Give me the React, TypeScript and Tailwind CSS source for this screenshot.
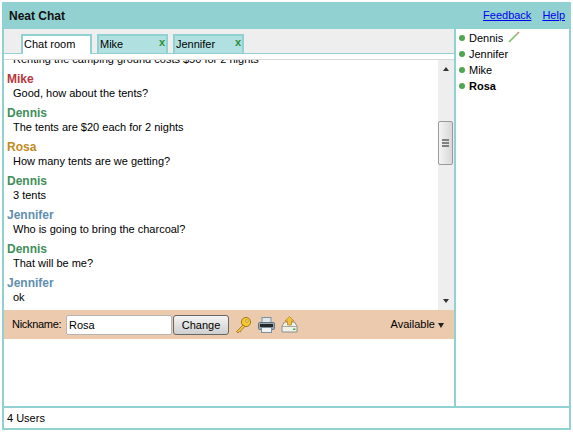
const font = { fontFamily: '"Liberation Sans", Arial, sans-serif' };

const messages: [string, string, string][] = [
  ["Mike", "text-[#b5383c]", "Good, how about the tents?"],
  ["Dennis", "text-[#3f8f5a]", "The tents are $20 each for 2 nights"],
  ["Rosa", "text-[#c08a20]", "How many tents are we getting?"],
  ["Dennis", "text-[#3f8f5a]", "3 tents"],
  ["Jennifer", "text-[#5f8fb0]", "Who is going to bring the charcoal?"],
  ["Dennis", "text-[#3f8f5a]", "That will be me?"],
  ["Jennifer", "text-[#5f8fb0]", "ok"],
];

function Tab({ label }: { label: string }) {
  return (
    <div className="relative w-[71px] h-[19px] bg-[#b0e0e0] border-2 border-b-0 border-[#92d1d1] pl-[1px] text-[11px] leading-[16px] text-black">
      {label}
      <span className="absolute right-[1px] top-[-1px] text-[11px] leading-[14px] font-bold text-[#2a8f35]">x</span>
    </div>
  );
}

function User({ name, bold, pencil }: { name: string; bold?: boolean; pencil?: boolean }) {
  return (
    <div className={`flex items-center h-[16px] pl-[3px] text-[11px] text-black ${bold ? "font-bold" : ""}`}>
      <span className="w-[6px] h-[6px] rounded-full bg-[#4fa64f] mr-[4px]" />
      <span>{name}</span>
      {pencil && (
        <svg width="12" height="12" viewBox="0 0 12 12" className="ml-[5px] mb-[3px]">
          <path d="M1 11 L9 3" stroke="#7fc06a" strokeWidth="1.7" />
          <path d="M9 3 L11 1" stroke="#d98a8a" strokeWidth="1.7" />
        </svg>
      )}
    </div>
  );
}

function KeyIcon() {
  return (
    <svg width="17" height="18" viewBox="0 0 17 18">
      <circle cx="11" cy="6" r="4.6" fill="#f5c830" stroke="#a07a20" strokeWidth="1" />
      <circle cx="12" cy="5" r="1.3" fill="#fdf0b0" stroke="#a07a20" strokeWidth="0.6" />
      <path d="M8 9 L1.5 15.5 L3 17 L4.5 15.5 L5.5 16 L6 14.5 L10 10.5 Z" fill="#f0c040" stroke="#9a7420" strokeWidth="0.8" />
    </svg>
  );
}

function PrinterIcon() {
  return (
    <svg width="17" height="16" viewBox="0 0 17 16">
      <rect x="4" y="0.5" width="9" height="5" fill="#dfe7ec" stroke="#7f8f9a" />
      <rect x="0.5" y="5.5" width="16" height="7" rx="1" fill="#9aa7b0" stroke="#66747d" />
      <rect x="2" y="7" width="13" height="3" fill="#24282b" />
      <rect x="3.5" y="10.5" width="10" height="5" fill="#eef3f6" stroke="#7f8f9a" />
    </svg>
  );
}

function UploadIcon() {
  return (
    <svg width="17" height="17" viewBox="0 0 17 17">
      <path d="M1 10 L3.5 6 H13.5 L16 10 V16 H1 Z" fill="#f1f1ea" stroke="#8b8f88" />
      <path d="M1 10.5 H16" stroke="#a7aaa3" />
      <rect x="12" y="12.5" width="2.5" height="1.5" fill="#46b04a" />
      <path d="M8.5 0.5 L13 5 H10.5 V9 H6.5 V5 H4 Z" fill="#f2c23e" stroke="#b98a20" strokeWidth="0.8" />
    </svg>
  );
}

export default function App() {
  return (
    <div className="w-[573px] h-[433px] bg-white p-[2px]" style={font}>
      <div className="w-[569px] h-[428px] flex flex-col border-2 border-t-0 border-[#92d1d1]">
        <div className="h-[27px] shrink-0 -mx-[2px] bg-[#92d1d1] flex items-center justify-between pl-[7px] pr-[6px]">
          <span className="text-[12px] font-bold text-[#111]">Neat Chat</span>
          <div className="flex gap-[11px] text-[11px] text-[#0000ee] underline">
            <span>Feedback</span>
            <span>Help</span>
          </div>
        </div>

        <div className="flex-1 min-h-0 flex">
          <div className="w-[450px] shrink-0 flex flex-col">
            <div className="h-[31px] shrink-0 flex flex-col">
              <div className="h-[25px] shrink-0 bg-[#eeeeee] flex items-end gap-[5px] pl-[17px] border-b border-[#92d1d1]">
                <div className="w-[71px] h-[20px] -mb-[1px] bg-white border-2 border-b-0 border-[#92d1d1] pl-[1px] text-[11px] leading-[16px] text-black">
                  Chat room
                </div>
                <Tab label="Mike" />
                <Tab label="Jennifer" />
              </div>
              <div className="flex-1 bg-white border-b border-[#d8d8d8]" />
            </div>

            <div className="h-[250px] shrink-0 flex">
              <div className="flex-1 overflow-hidden bg-white">
                <div className="-mt-[9px] pl-[3px] text-[11px] leading-[16px]">
                  <div className="pl-[6px] h-[16px] text-black">Renting the camping ground costs $50 for 2 nights</div>
                  {messages.map(([name, color, text], i) => (
                    <div key={i} className="mt-[6px] first:mt-[8px]">
                      <div className={`font-bold ${color} text-[12px] leading-[12px] h-[12px]`}>{name}</div>
                      <div className="pl-[6px] text-black leading-[16px]">{text}</div>
                    </div>
                  ))}
                </div>
              </div>
              <div className="w-[16px] shrink-0 bg-[#eeeeee] flex flex-col items-center">
                <div className="h-[18px] shrink-0 flex items-center">
                  <div className="w-0 h-0 border-x-[3px] border-x-transparent border-b-[4px] border-b-[#333]" />
                </div>
                <div className="mt-[43px] w-[15px] h-[44px] self-start rounded-[2px] border border-[#9a9a9a] bg-gradient-to-r from-[#f4f4f4] to-[#d8d8d8] flex flex-col items-center justify-center gap-[1px]">
                  <div className="w-[7px] h-[2px] bg-[#808080]" />
                  <div className="w-[7px] h-[2px] bg-[#808080]" />
                  <div className="w-[7px] h-[2px] bg-[#808080]" />
                </div>
                <div className="mt-auto h-[18px] shrink-0 flex items-center">
                  <div className="w-0 h-0 border-x-[3px] border-x-transparent border-t-[4px] border-t-[#333]" />
                </div>
              </div>
            </div>

            <div className="h-[29px] shrink-0 bg-[#ebcaae] flex items-center pl-[8px] pr-[10px] text-[11px] text-black">
              <span className="w-[54px] tracking-[-0.3px]">Nickname:</span>
              <div className="w-[106px] h-[20px] bg-white border border-[#b5b5b5] rounded-[2px] pl-[2px] leading-[18px]">Rosa</div>
              <div className="ml-[1px] w-[56px] h-[20px] rounded-[3px] border border-[#666] bg-gradient-to-b from-[#f4f4f4] to-[#cfcfcf] text-center leading-[18px]">Change</div>
              <div className="ml-[6px] flex items-center gap-[6px]">
                <KeyIcon />
                <PrinterIcon />
                <UploadIcon />
              </div>
              <div className="ml-auto flex items-center gap-[3px]">
                <span>Available</span>
                <div className="w-0 h-0 border-x-[3px] border-x-transparent border-t-[5px] border-t-[#222] mt-[1px]" />
              </div>
            </div>

            <div className="flex-1 bg-white" />
          </div>

          <div className="flex-1 border-l-2 border-[#92d1d1] pt-[1px] bg-white">
            <User name="Dennis" pencil />
            <User name="Jennifer" />
            <User name="Mike" />
            <User name="Rosa" bold />
          </div>
        </div>

        <div className="h-[22px] shrink-0 border-t-2 border-[#92d1d1] pl-[3px] text-[11px] leading-[20px] text-black">4 Users</div>
      </div>
    </div>
  );
}
